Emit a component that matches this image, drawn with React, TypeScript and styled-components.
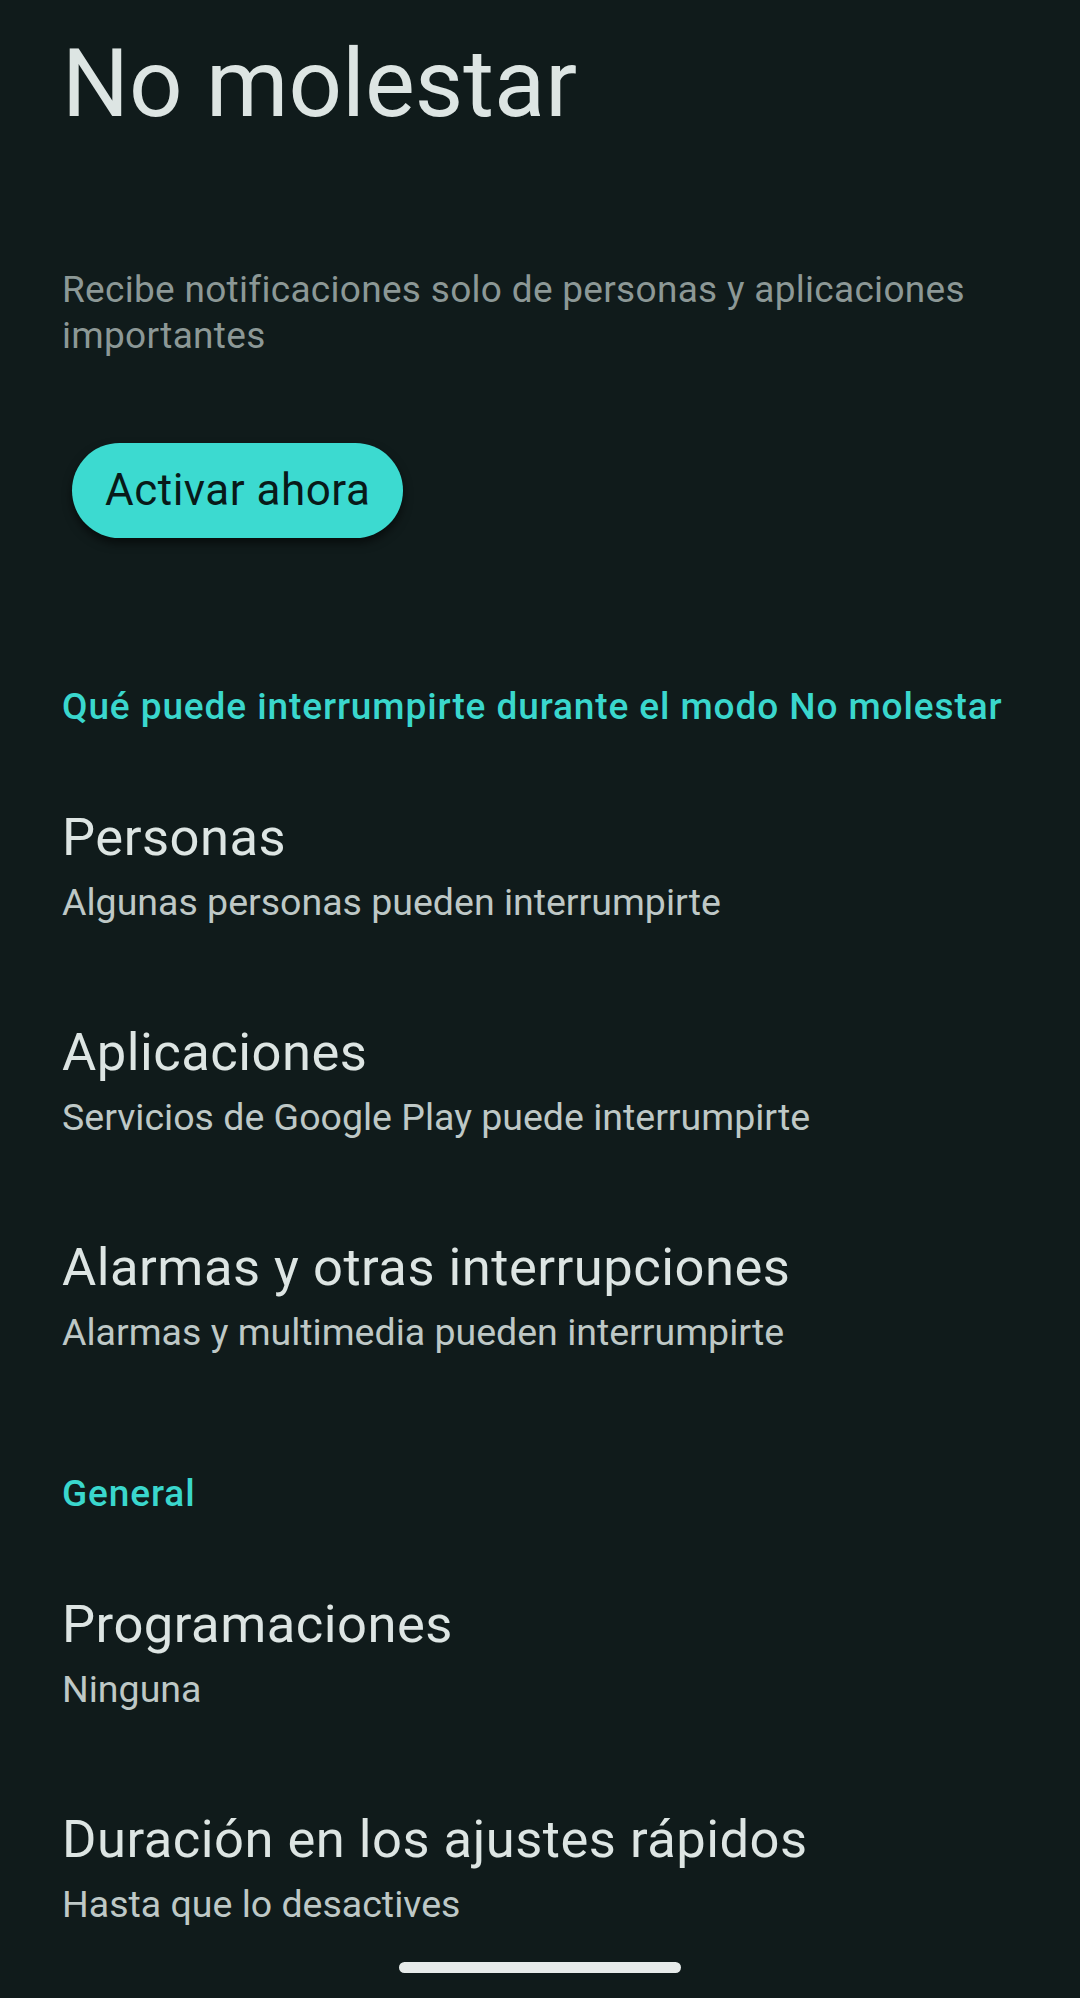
import styled, { createGlobalStyle } from "styled-components";

const GlobalStyle = createGlobalStyle`
  html, body {
    margin: 0;
    padding: 0;
    background-color: #101b1b;
  }
  body {
    font-family: Roboto, "Liberation Sans", Arial, sans-serif;
    min-height: 100vh;
  }
`;

const items = {
  interrupt: [
    { title: "Personas", summary: "Algunas personas pueden interrumpirte" },
    { title: "Aplicaciones", summary: "Servicios de Google Play puede interrumpirte" },
    { title: "Alarmas y otras interrupciones", summary: "Alarmas y multimedia pueden interrumpirte" },
  ],
  general: [
    { title: "Programaciones", summary: "Ninguna" },
    { title: "Duración en los ajustes rápidos", summary: "Hasta que lo desactives" },
  ],
};

export default function App() {
  return (
    <>
      <GlobalStyle />
      <Screen>
        <Title>No molestar</Title>
        <Intro>
          Recibe notificaciones solo de personas y aplicaciones importantes
        </Intro>
        <ActionButton>Activar ahora</ActionButton>

        <Section>
          <Category>Qué puede interrumpirte durante el modo No molestar</Category>
          {items.interrupt.map((it) => (
            <Preference key={it.title}>
              <PrefTitle>{it.title}</PrefTitle>
              <PrefSummary>{it.summary}</PrefSummary>
            </Preference>
          ))}
        </Section>

        <Section>
          <Category>General</Category>
          {items.general.map((it) => (
            <Preference key={it.title}>
              <PrefTitle>{it.title}</PrefTitle>
              <PrefSummary>{it.summary}</PrefSummary>
            </Preference>
          ))}
        </Section>
      </Screen>
      <NavHandle />
    </>
  );
}

const Screen = styled.div`
  display: flex;
  flex-direction: column;
  align-items: flex-start;
  padding: 28px 40px 0 62px;
  min-height: 1998px;
  box-sizing: border-box;
  background-color: #101b1b;
`;

const Title = styled.h1`
  margin: 0;
  font-size: 94px;
  line-height: 113px;
  font-weight: 400;
  color: #dde5e3;
`;

const Intro = styled.p`
  margin: 126px 0 0 0;
  font-size: 37px;
  line-height: 46px;
  letter-spacing: 0.3px;
  color: #8c9896;
  max-width: 960px;
`;

const ActionButton = styled.button`
  margin: 84px 0 0 10px;
  height: 95px;
  padding: 0 33px;
  border: none;
  border-radius: 48px;
  background-color: #3cdad0;
  color: #081a19;
  font-family: Roboto, "Liberation Sans", Arial, sans-serif;
  font-size: 44px;
  font-weight: 400;
  letter-spacing: 0.5px;
  line-height: 95px;
  box-shadow: 0 5px 10px rgba(0, 0, 0, 0.55);
`;

const Section = styled.section`
  display: flex;
  flex-direction: column;
  align-self: stretch;
  &:first-of-type {
    margin-top: 78px;
  }
`;

const Category = styled.h2`
  margin: 0;
  padding: 68px 0 28px 0;
  font-size: 37px;
  line-height: 46px;
  font-weight: 500;
  letter-spacing: 0.9px;
  color: #3ad7cd;
`;

const Preference = styled.div`
  display: flex;
  flex-direction: column;
  padding: 47px 0;
`;

const PrefTitle = styled.div`
  font-size: 52.5px;
  line-height: 64px;
  letter-spacing: 0.5px;
  color: #dde5e3;
`;

const PrefSummary = styled.div`
  margin-top: 9px;
  font-size: 37.5px;
  line-height: 48px;
  color: #bec8c6;
`;

const NavHandle = styled.div`
  position: fixed;
  left: 50%;
  bottom: 25px;
  width: 282px;
  height: 11px;
  margin-left: -141px;
  border-radius: 6px;
  background-color: #e6ebea;
`;
